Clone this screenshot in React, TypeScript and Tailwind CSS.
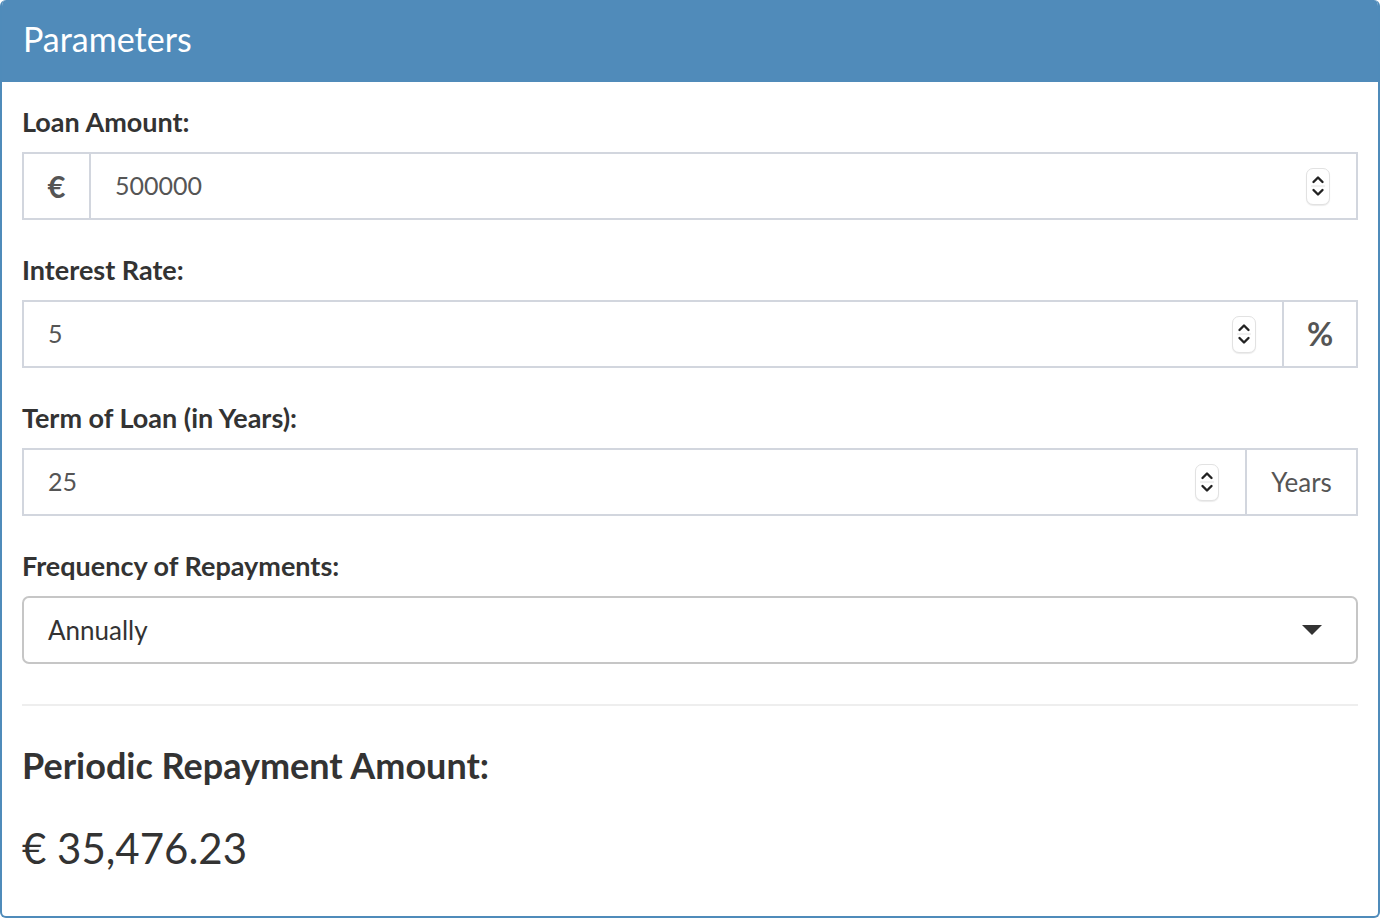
const font = { fontFamily: "Lato, 'Noto Sans', sans-serif" };

function Spinner() {
  return (
    <div className="flex h-[37px] w-[24px] flex-col items-center justify-center rounded-[7px] border border-[#e2e2e2] bg-white shadow-[0_1px_1px_rgba(0,0,0,0.08)]">
      <svg width="14" height="30" viewBox="0 0 14 30" fill="none" stroke="#222" strokeWidth="2.4" strokeLinecap="round" strokeLinejoin="round">
        <path d="M2.5 11 L7 6.5 L11.5 11" />
        <line x1="0" y1="15" x2="14" y2="15" stroke="#e2e2e2" strokeWidth="1" />
        <path d="M2.5 19 L7 23.5 L11.5 19" />
      </svg>
    </div>
  );
}

function Label({ children }: { children: React.ReactNode }) {
  return <label className="mb-[10px] block text-[27px] font-bold leading-[40px] text-[#333]">{children}</label>;
}

function NumberInput({ value }: { value: string }) {
  return (
    <div className="flex h-full flex-1 items-center justify-between pl-[24px] pr-[26px] text-[25px] text-[#555]">
      <span>{value}</span>
      <Spinner />
    </div>
  );
}

function Addon({ children, className = "" }: { children: React.ReactNode; className?: string }) {
  return (
    <div className={`flex h-full items-center justify-center text-[#555] ${className}`}>
      {children}
    </div>
  );
}

export default function App() {
  return (
    <div className="h-[918px] w-[1380px] bg-white" style={font}>
      <div className="flex h-full flex-col overflow-hidden rounded-[6px] border-2 border-t-0 border-[#4f8bba]">
        <div className="flex h-[82px] shrink-0 items-center bg-[#508bba] px-[21px] pb-[5px] text-[34px] text-white">
          Parameters
        </div>
        <div className="px-[20px] pt-[20px]">
          <div className="mb-[30px]">
            <Label>Loan Amount:</Label>
            <div className="flex h-[68px] border-2 border-[#d2d6de]">
              <Addon className="w-[67px] border-r-2 border-[#d2d6de] text-[31px] font-bold">€</Addon>
              <NumberInput value="500000" />
            </div>
          </div>

          <div className="mb-[30px]">
            <Label>Interest Rate:</Label>
            <div className="flex h-[68px] border-2 border-[#d2d6de]">
              <NumberInput value="5" />
              <Addon className="w-[74px] border-l-2 border-[#d2d6de] text-[32px] font-bold">%</Addon>
            </div>
          </div>

          <div className="mb-[30px]">
            <Label>Term of Loan (in Years):</Label>
            <div className="flex h-[68px] border-2 border-[#d2d6de]">
              <NumberInput value="25" />
              <Addon className="w-[111px] border-l-2 border-[#d2d6de] text-[26px]">Years</Addon>
            </div>
          </div>

          <div>
            <Label>Frequency of Repayments:</Label>
            <div className="flex h-[68px] items-center justify-between rounded-[7px] border-2 border-[#c6c6c6] pl-[24px] pr-[34px] text-[26px] text-[#333]">
              <span>Annually</span>
              <svg width="20" height="10" viewBox="0 0 20 10">
                <path d="M0 0 L20 0 L10 10 Z" fill="#333" />
              </svg>
            </div>
          </div>

          <div className="mt-[40px] h-[2px] bg-[#eeeeee]" />

          <h4 className="mt-[39px] text-[36px] font-bold leading-[40px] text-[#333]">Periodic Repayment Amount:</h4>
          <div className="mt-[37px] text-[42px] leading-[53px] text-[#333]">€ 35,476.23</div>
        </div>
      </div>
    </div>
  );
}
